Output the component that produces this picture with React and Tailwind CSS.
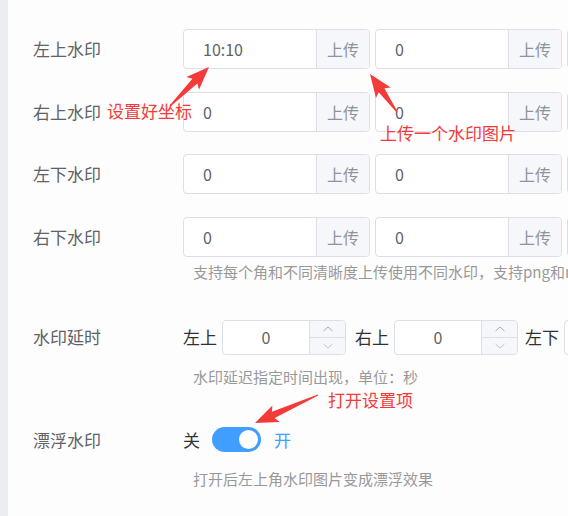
import React from 'react'

const FONT = '"Noto Sans CJK SC", "Noto Sans", sans-serif'
const RED = '#f53a3a'

const ROWS = [
  { label: '左上水印', values: ['10:10', '0', '0'] },
  { label: '右上水印', values: ['0', '0', '0'] },
  { label: '左下水印', values: ['0', '0', '0'] },
  { label: '右下水印', values: ['0', '0', '0'] },
]

function arrowPoints(x1, y1, x2, y2, hl = 20, hw = 9, sw = 3.5) {
  const dx = x2 - x1
  const dy = y2 - y1
  const len = Math.hypot(dx, dy)
  const ux = dx / len
  const uy = dy / len
  const nx = -uy
  const ny = ux
  const bx = x2 - ux * hl
  const by = y2 - uy * hl
  const pts = [
    [x1 + nx * 0.6, y1 + ny * 0.6],
    [bx + nx * sw, by + ny * sw],
    [bx + nx * hw - ux * 3, by + ny * hw - uy * 3],
    [x2, y2],
    [bx - nx * hw - ux * 3, by - ny * hw - uy * 3],
    [bx - nx * sw, by - ny * sw],
    [x1 - nx * 0.6, y1 - ny * 0.6],
  ]
  return pts.map((p) => p.map((v) => v.toFixed(1)).join(',')).join(' ')
}

function UploadInput({ value }) {
  return (
    <div className="flex shrink-0 w-[187px] h-[40px] border border-[#dcdfe6] rounded-[4px] bg-white overflow-hidden">
      <div className="flex-1 flex items-center pl-[19px] text-[16px] text-[#606266]">{value}</div>
      <div className="w-[53px] flex items-center justify-center bg-[#f5f7fa] border-l border-[#dcdfe6] text-[16px] text-[#909399]">上传</div>
    </div>
  )
}

function Stepper() {
  return (
    <div className="flex shrink-0 w-[124px] h-[35px] border border-[#dcdfe6] rounded-[4px] bg-white overflow-hidden">
      <div className="flex-1 flex items-center justify-center text-[16px] text-[#606266]">0</div>
      <div className="w-[36px] flex flex-col bg-[#f5f7fa] border-l border-[#dcdfe6]">
        <div className="flex-1 flex items-center justify-center border-b border-[#dcdfe6]">
          <svg width="12" height="8" viewBox="0 0 12 8"><path d="M1.5 6 L6 2 L10.5 6" fill="none" stroke="#a8abb2" strokeWidth="1" /></svg>
        </div>
        <div className="flex-1 flex items-center justify-center">
          <svg width="12" height="8" viewBox="0 0 12 8"><path d="M1.5 2 L6 6 L10.5 2" fill="none" stroke="#c0c4cc" strokeWidth="1" /></svg>
        </div>
      </div>
    </div>
  )
}

export default function App() {
  return (
    <div className="relative w-[568px] h-[516px] overflow-hidden flex bg-[#fdfdfd]" style={{ fontFamily: FONT }}>
      <div className="w-[8px] shrink-0 bg-[#ecedf0]" />

      <div className="flex-1 pl-[25px] pt-[29px]">
        {/* watermark rows */}
        {ROWS.map((row, i) => (
          <div key={row.label} className={`flex items-center ${i < 3 ? 'mb-[22.5px]' : ''}`}>
            <div className="w-[150px] shrink-0 text-[17px] text-[#606266]">{row.label}</div>
            <div className="flex gap-[5px]">
              {row.values.map((v, j) => <UploadInput key={j} value={v} />)}
            </div>
          </div>
        ))}
        <div className="ml-[160px] mt-[5px] h-[20px] leading-[20px] text-[15px] text-[#999] whitespace-nowrap">
          支持每个角和不同清晰度上传使用不同水印，支持png和mp4格式
        </div>

        {/* delay */}
        <div className="flex items-center mt-[38px]">
          <div className="w-[150px] shrink-0 text-[17px] text-[#606266]">水印延时</div>
          <div className="flex items-center text-[17px] text-[#303133] whitespace-nowrap">
            <span className="mr-[5px]">左上</span>
            <Stepper />
            <span className="ml-[9px] mr-[5px]">右上</span>
            <Stepper />
            <span className="ml-[7px] mr-[5px]">左下</span>
            <Stepper />
          </div>
        </div>
        <div className="ml-[160px] mt-[12px] h-[20px] leading-[20px] text-[15px] text-[#999] whitespace-nowrap">
          水印延迟指定时间出现，单位：秒
        </div>

        {/* floating */}
        <div className="flex items-center mt-[36px] h-[34px]">
          <div className="w-[150px] shrink-0 text-[17px] text-[#606266]">漂浮水印</div>
          <span className="text-[17px] text-[#303133]">关</span>
          <div className="ml-[12px] w-[49px] h-[25px] rounded-full bg-[#409eff] flex items-center justify-end pr-[3px]">
            <div className="w-[19px] h-[19px] rounded-full bg-white" />
          </div>
          <span className="ml-[13px] text-[17px] text-[#409eff]">开</span>
        </div>
        <div className="ml-[160px] mt-[12px] h-[20px] leading-[20px] text-[15px] text-[#999] whitespace-nowrap">
          打开后左上角水印图片变成漂浮效果
        </div>
      </div>

      {/* annotations */}
      <svg className="absolute inset-0 pointer-events-none" width="568" height="516">
        <polygon points={arrowPoints(170, 106, 209, 67)} fill={RED} />
        <polygon points={arrowPoints(397, 112, 370, 74)} fill={RED} />
        <polygon points={arrowPoints(318, 395, 255, 423)} fill={RED} />
      </svg>
      <div className="absolute left-[107px] top-[100px] text-[17px] leading-[22px] text-[#f53a3a]">设置好坐标</div>
      <div className="absolute left-[380px] top-[122px] text-[17px] leading-[22px] text-[#f53a3a]">上传一个水印图片</div>
      <div className="absolute left-[328px] top-[389px] text-[17px] leading-[22px] text-[#f53a3a]">打开设置项</div>
    </div>
  )
}
